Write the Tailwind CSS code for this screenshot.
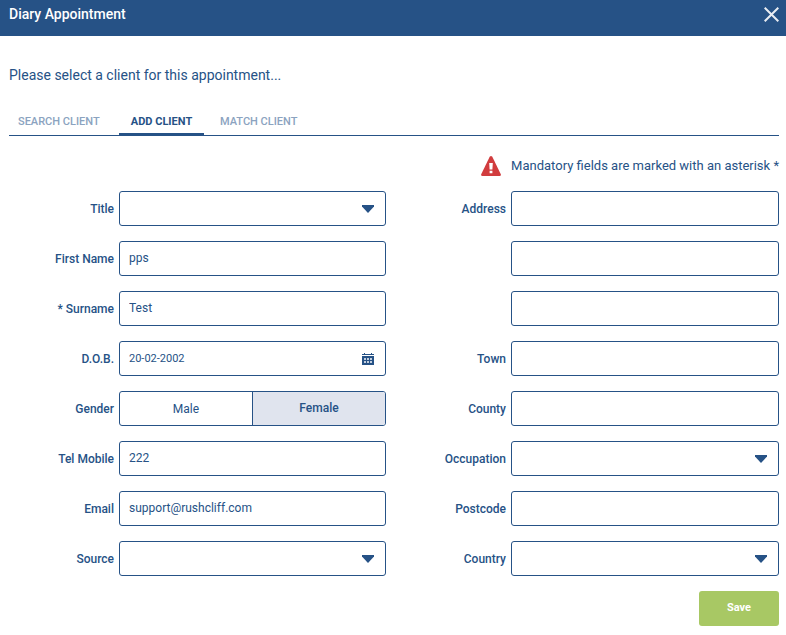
<!DOCTYPE html>
<html lang="en">
<head>
    <meta charset="UTF-8">
    <meta name="viewport" content="width=device-width, initial-scale=1.0">
    <title>Diary Appointment</title>
    <script src="https://cdn.jsdelivr.net/npm/@tailwindcss/browser@4"></script>
</head>
<body class="bg-white font-['Roboto',sans-serif] text-[#265286]">
    <header class="h-9 bg-[#265286] text-white flex justify-between items-start pl-[9px] pr-[7px] pt-1">
        <h1 class="text-sm leading-5 font-medium">Diary Appointment</h1>
        <button type="button" aria-label="Close" class="pt-[3px]">
            <svg class="w-[15px] h-[15px]" viewBox="0 0 15 15" fill="none" stroke="#e9edf3" stroke-width="2"><path d="M0.7 0.7L14.3 14.3M14.3 0.7L0.7 14.3"/></svg>
        </button>
    </header>

    <main class="pl-[9px] pr-[7px] pt-[29px]">
        <p class="text-sm leading-5">Please select a client for this appointment...</p>

        <!-- Tabs -->
        <nav class="mt-[27px] flex border-b border-[#265286] text-[11px] leading-5 font-medium text-[#8ba3c0]">
            <a href="#search" class="w-[110px] pl-[9px] h-[23px]">SEARCH CLIENT</a>
            <a href="#add" class="w-[85px] h-[23px] text-center font-bold text-[#265286] border-b-2 border-[#265286]">ADD CLIENT</a>
            <a href="#match" class="pl-4 h-[23px]">MATCH CLIENT</a>
        </nav>

        <div class="mt-5 flex justify-end items-center gap-[10px] text-[13px] leading-5">
            <svg class="w-5 h-5" viewBox="0 0 20 20"><path d="M8.7 0.8Q10 -0.8 11.3 0.8L19.8 18.3Q20.2 20 18.6 20H1.4Q-0.2 20 0.2 18.3Z" fill="#d13c3e"/><path d="M8.2 7H11.8L11.4 13.4H8.6ZM8.6 14.8H11.4V17.3H8.6Z" fill="#fff"/></svg>
            <p>Mandatory fields are marked with an asterisk *</p>
        </div>

        <form class="mt-[15px] text-xs">
            <div class="grid grid-cols-2 gap-x-4">
                <!-- Personal details -->
                <div class="flex flex-col gap-[15px]">
                    <div class="flex items-center gap-[5px]">
                        <label for="title" class="w-[105px] shrink-0 text-right font-medium">Title</label>
                        <div class="relative flex-1">
                            <select id="title" class="block w-full h-[35px] px-[10px] border border-[#265286] rounded-[3px] appearance-none bg-white"><option></option></select>
                            <svg class="absolute right-3 top-[14px] w-3 h-2 pointer-events-none" viewBox="0 0 12 8"><path d="M0 0H12V1.5L6 8L0 1.5Z" fill="#265286"/></svg>
                        </div>
                    </div>
                    <div class="flex items-center gap-[5px]">
                        <label for="first-name" class="w-[105px] shrink-0 text-right font-medium">First Name</label>
                        <input type="text" id="first-name" value="pps" class="flex-1 min-w-0 h-[35px] px-[9px] pb-px border border-[#265286] rounded-[3px]">
                    </div>
                    <div class="flex items-center gap-[5px]">
                        <label for="surname" class="w-[105px] shrink-0 text-right font-medium">* Surname</label>
                        <input type="text" id="surname" value="Test" class="flex-1 min-w-0 h-[35px] px-[9px] pb-px border border-[#265286] rounded-[3px]">
                    </div>
                    <div class="flex items-center gap-[5px]">
                        <label for="dob" class="w-[105px] shrink-0 text-right font-medium">D.O.B.</label>
                        <div class="relative flex-1">
                            <input type="text" id="dob" value="20-02-2002" class="block w-full h-[35px] px-[9px] pb-px border border-[#265286] rounded-[3px] text-[11px]">
                            <button type="button" aria-label="Open calendar" class="absolute right-3 top-3">
                                <svg class="block w-3 h-3" viewBox="0 0 12 12"><path d="M2 0H3V1H9V0H10V1H12V2H0V1H2ZM0 3H12V12H0Z" fill="#265286"/><path d="M2 5H4V7H2ZM5 5H7V7H5ZM8 5H10V7H8ZM2 8H4V10H2ZM5 8H7V10H5ZM8 8H10V10H8Z" fill="#c2cede"/></svg>
                            </button>
                        </div>
                    </div>
                    <div class="flex items-center gap-[5px]" role="radiogroup" aria-labelledby="gender-label">
                        <span id="gender-label" class="w-[105px] shrink-0 text-right font-medium">Gender</span>
                        <div class="flex-1 flex h-[35px] border border-[#265286] rounded-[3px] overflow-hidden">
                            <label class="flex-1 flex items-center justify-center cursor-pointer has-checked:bg-[#e0e4ee] has-checked:font-medium">
                                <input type="radio" name="gender" value="male" class="sr-only">Male
                            </label>
                            <label class="flex-1 flex items-center justify-center cursor-pointer border-l border-[#265286] pb-px has-checked:bg-[#e0e4ee] has-checked:font-medium">
                                <input type="radio" name="gender" value="female" class="sr-only" checked>Female
                            </label>
                        </div>
                    </div>
                    <div class="flex items-center gap-[5px]">
                        <label for="mobile" class="w-[105px] shrink-0 text-right font-medium">Tel Mobile</label>
                        <input type="tel" id="mobile" value="222" class="flex-1 min-w-0 h-[35px] px-[9px] pb-px border border-[#265286] rounded-[3px]">
                    </div>
                    <div class="flex items-center gap-[5px]">
                        <label for="email" class="w-[105px] shrink-0 text-right font-medium">Email</label>
                        <input type="email" id="email" value="support@rushcliff.com" class="flex-1 min-w-0 h-[35px] px-[9px] pb-px border border-[#265286] rounded-[3px]">
                    </div>
                    <div class="flex items-center gap-[5px]">
                        <label for="source" class="w-[105px] shrink-0 text-right font-medium">Source</label>
                        <div class="relative flex-1">
                            <select id="source" class="block w-full h-[35px] px-[10px] border border-[#265286] rounded-[3px] appearance-none bg-white"><option></option></select>
                            <svg class="absolute right-3 top-[14px] w-3 h-2 pointer-events-none" viewBox="0 0 12 8"><path d="M0 0H12V1.5L6 8L0 1.5Z" fill="#265286"/></svg>
                        </div>
                    </div>
                </div>

                <!-- Address -->
                <div class="flex flex-col gap-[15px]">
                    <div class="flex items-center gap-[5px]">
                        <label for="address1" class="w-[104px] shrink-0 text-right font-medium">Address</label>
                        <input type="text" id="address1" class="flex-1 min-w-0 h-[35px] px-[9px] pb-px border border-[#265286] rounded-[3px]">
                    </div>
                    <div class="flex pl-[109px]">
                        <input type="text" id="address2" aria-label="Address line 2" class="flex-1 min-w-0 h-[35px] px-[9px] pb-px border border-[#265286] rounded-[3px]">
                    </div>
                    <div class="flex pl-[109px]">
                        <input type="text" id="address3" aria-label="Address line 3" class="flex-1 min-w-0 h-[35px] px-[9px] pb-px border border-[#265286] rounded-[3px]">
                    </div>
                    <div class="flex items-center gap-[5px]">
                        <label for="town" class="w-[104px] shrink-0 text-right font-medium">Town</label>
                        <input type="text" id="town" class="flex-1 min-w-0 h-[35px] px-[9px] pb-px border border-[#265286] rounded-[3px]">
                    </div>
                    <div class="flex items-center gap-[5px]">
                        <label for="county" class="w-[104px] shrink-0 text-right font-medium">County</label>
                        <input type="text" id="county" class="flex-1 min-w-0 h-[35px] px-[9px] pb-px border border-[#265286] rounded-[3px]">
                    </div>
                    <div class="flex items-center gap-[5px]">
                        <label for="occupation" class="w-[104px] shrink-0 text-right font-medium">Occupation</label>
                        <div class="relative flex-1">
                            <select id="occupation" class="block w-full h-[35px] px-[10px] border border-[#265286] rounded-[3px] appearance-none bg-white"><option></option></select>
                            <svg class="absolute right-3 top-[14px] w-3 h-2 pointer-events-none" viewBox="0 0 12 8"><path d="M0 0H12V1.5L6 8L0 1.5Z" fill="#265286"/></svg>
                        </div>
                    </div>
                    <div class="flex items-center gap-[5px]">
                        <label for="postcode" class="w-[104px] shrink-0 text-right font-medium">Postcode</label>
                        <input type="text" id="postcode" class="flex-1 min-w-0 h-[35px] px-[9px] pb-px border border-[#265286] rounded-[3px]">
                    </div>
                    <div class="flex items-center gap-[5px]">
                        <label for="country" class="w-[104px] shrink-0 text-right font-medium">Country</label>
                        <div class="relative flex-1">
                            <select id="country" class="block w-full h-[35px] px-[10px] border border-[#265286] rounded-[3px] appearance-none bg-white"><option></option></select>
                            <svg class="absolute right-3 top-[14px] w-3 h-2 pointer-events-none" viewBox="0 0 12 8"><path d="M0 0H12V1.5L6 8L0 1.5Z" fill="#265286"/></svg>
                        </div>
                    </div>
                </div>
            </div>

            <div class="mt-[15px] flex justify-end">
                <button type="submit" class="w-20 h-[35px] bg-[#a8c864] text-white text-[11px] font-bold rounded-[3px]">Save</button>
            </div>
        </form>
    </main>
</body>
</html>
